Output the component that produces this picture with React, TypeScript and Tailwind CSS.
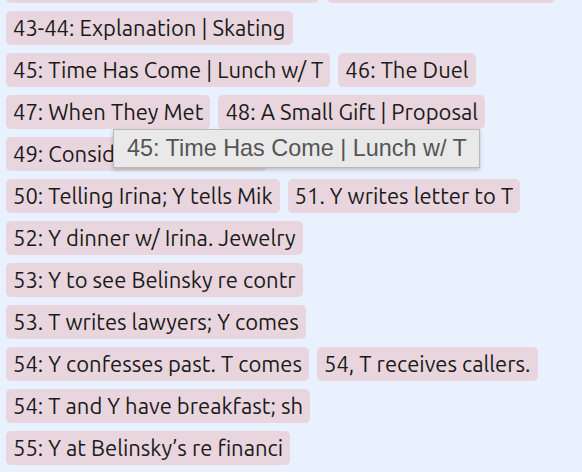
import React from "react";

const scenes: string[][] = [
  ["41: Y calls on T at the hotel; w/", "42: Drive to the ballet"],
  ["43-44: Explanation | Skating"],
  ["45: Time Has Come | Lunch w/ T", "46: The Duel"],
  ["47: When They Met", "48: A Small Gift | Proposal"],
  ["49: Considering the offer"],
  ["50: Telling Irina; Y tells Mik", "51. Y writes letter to T"],
  ["52: Y dinner w/ Irina. Jewelry"],
  ["53: Y to see Belinsky re contr"],
  ["53. T writes lawyers; Y comes"],
  ["54: Y confesses past. T comes", "54, T receives callers."],
  ["54: T and Y have breakfast; sh"],
  ["55: Y at Belinsky\u2019s re financi"],
  ["56: T leaves for the station w/"],
];

const Chip = ({ label }: { label: string }) => (
  <div className="rounded-[5px] bg-[#e8d5dd] px-[7px] py-[4px] text-[22px] leading-[26px] whitespace-nowrap text-[#1a1a1a]">
    {label}
  </div>
);

const App = () => {
  return (
    <div className="relative h-[472px] w-[582px] overflow-hidden bg-[#e8f1fd] font-['Ubuntu','Open_Sans',sans-serif]">
      <div className="-mt-[31px] flex flex-col gap-2 px-[6px]">
        {scenes.map((row, i) => (
          <div key={i} className="flex gap-2">
            {row.map((s) => (
              <Chip key={s} label={s} />
            ))}
          </div>
        ))}
      </div>
      {/* hover title */}
      <div className="absolute left-[113px] top-[129px] border border-[#b9b9b9] bg-[#e9e9e9] pl-[13px] pr-[12px] py-[5px] font-['Liberation_Sans',Arial,sans-serif] text-[23.4px] leading-[27px] whitespace-nowrap text-[#555] shadow-[0_2px_4px_rgba(0,0,0,0.2)]">
        45: Time Has Come | Lunch w/ T
      </div>
    </div>
  );
};

export default App;
